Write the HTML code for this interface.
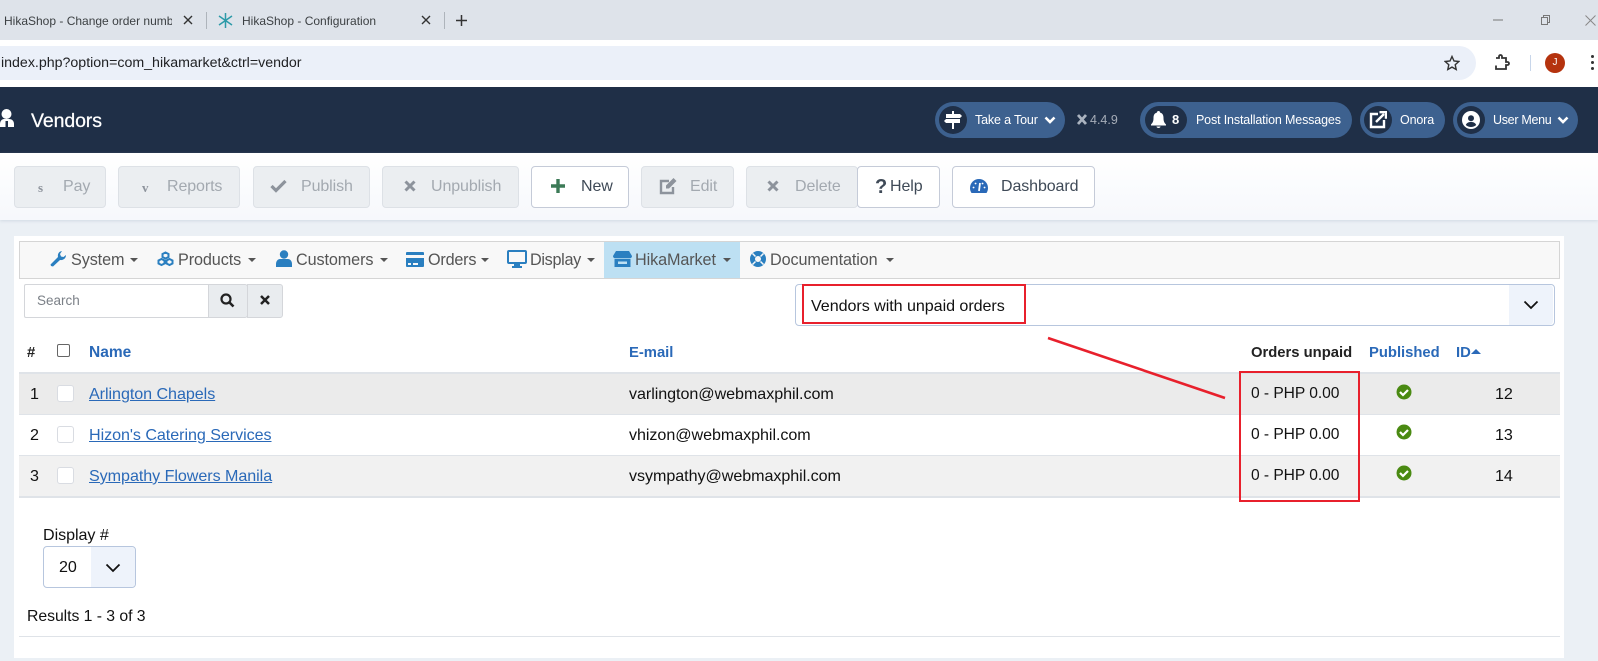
<!DOCTYPE html>
<html><head><meta charset="utf-8"><title>Vendors</title>
<style>
html,body{margin:0;padding:0}
body{width:1598px;height:661px;overflow:hidden;position:relative;background:#ebf0f5;font-family:"Liberation Sans",sans-serif;color:#111}
.a{position:absolute}
.t{position:absolute;white-space:nowrap;line-height:20px;height:20px}
.btn{position:absolute;top:166px;height:40px;border:1px solid #c5cbd8;border-radius:4px;background:#fff}
.dis{background:#ebeef1;border-color:#dde1e6}
.bt{font-size:16px;color:#3f4a57;letter-spacing:-.1px;top:177px}
.dt{color:#a3a9b0}
.pill{position:absolute;top:102px;height:36px;border-radius:18px;background:#3d618f}
.pc{position:absolute;top:106px;height:28px;border-radius:14px;background:#1f2f47}
.pt{color:#fff;font-size:12.5px;top:110px;letter-spacing:-.15px}
.nv{font-size:16.2px;color:#555;top:250px;letter-spacing:-.1px}
.car{position:absolute;top:258px;width:0;height:0;border:4px solid transparent;border-top-color:#555;border-bottom:0}
.row{position:absolute;left:19px;width:1541px}
.c{font-size:16.1px;color:#111;letter-spacing:-.05px}
.o{font-size:15.6px}
.lnk{font-size:16.1px;color:#2a69b8;text-decoration:underline;letter-spacing:-.05px}
.h{font-size:14.8px;font-weight:bold;color:#2a69b8;top:343px}
.cb{position:absolute;left:57px;width:15px;height:15px;background:#fff;border:1px solid #d9dce2;border-radius:3px}
svg{position:absolute;display:block}
</style></head>
<body>
<!-- browser chrome -->
<div class="a" style="left:0;top:0;width:1598px;height:40px;background:#dee3ea"></div>
<div class="a" style="left:0;top:40px;width:1598px;height:47px;background:#fff"></div>
<div class="a" style="left:0;top:46px;width:1476px;height:34px;background:#ebf0f9;border-radius:0 17px 17px 0"></div>
<div class="t" style="left:4px;top:11px;width:168px;overflow:hidden;font-size:12px;color:#3c4043">HikaShop - Change order numb</div>
<svg style="left:183px;top:15px" width="10" height="10" viewBox="0 0 10 10"><path d="M1 1l8 8M9 1l-8 8" stroke="#333" stroke-width="1.4"/></svg>
<div class="a" style="left:206px;top:12px;width:1px;height:17px;background:#aeb4bb"></div>
<svg style="left:218px;top:13px" width="15" height="15" viewBox="0 0 15 15"><path d="M7.500 0v15M1 3l13 9M14 3L1 12" stroke="#2c9aa8" stroke-width="1.5"/></svg>
<div class="t" style="left:242px;top:11px;font-size:12px;color:#3c4043">HikaShop - Configuration</div>
<svg style="left:421px;top:15px" width="10" height="10" viewBox="0 0 10 10"><path d="M1 1l8 8M9 1l-8 8" stroke="#333" stroke-width="1.4"/></svg>
<div class="a" style="left:444px;top:12px;width:1px;height:17px;background:#aeb4bb"></div>
<svg style="left:456px;top:15px" width="11" height="11" viewBox="0 0 11 11"><path d="M5.500 0v11M0 5.500h11" stroke="#333" stroke-width="1.500"/></svg>
<svg style="left:1492px;top:15px" width="12" height="10" viewBox="0 0 12 10"><path d="M1 5h10" stroke="#777"/></svg>
<svg style="left:1539px;top:14px" width="12" height="12" viewBox="0 0 12 12"><path d="M2.500 3.500h6v7h-6zM4.500 3.500V1.500h6v7H8.500" fill="none" stroke="#777"/></svg>
<svg style="left:1585px;top:15px" width="11" height="11" viewBox="0 0 11 11"><path d="M.5.500l10 10M10.500.500l-10 10" stroke="#888"/></svg>
<div class="t" style="left:1px;top:53px;font-size:14.2px;color:#202124">index.php?option=com_hikamarket&amp;ctrl=vendor</div>
<svg style="left:1444px;top:55px" width="16" height="16" viewBox="0 0 16 16"><path d="M8 1.500l2 4.500 4.800.5-3.600 3.200 1 4.800L8 12.100l-4.200 2.400 1-4.800L1.200 6.500 6 6z" fill="none" stroke="#333" stroke-width="1.400"/></svg>
<svg style="left:1494px;top:54px" width="16" height="17" viewBox="0 0 16 17"><path d="M2 4h3V2.500a1.500 1.500 0 013 0V4h4v4h1.500a1.500 1.500 0 010 3H12v4H2v-3.500" fill="none" stroke="#333" stroke-width="1.800"/></svg>
<div class="a" style="left:1530px;top:55px;width:1px;height:16px;background:#c8d6ea"></div>
<div class="a" style="left:1545px;top:53px;width:20px;height:20px;border-radius:50%;background:#b5330e;color:#fff;font-size:10px;line-height:20px;text-align:center">J</div>
<div class="a" style="left:1591px;top:55px;width:3px;height:3px;border-radius:50%;background:#333;box-shadow:0 6px 0 #333,0 12px 0 #333"></div>

<!-- header -->
<div class="a" style="left:0;top:87px;width:1598px;height:66px;background:#1f2f47"></div>
<svg style="left:0;top:108px" width="15" height="21" viewBox="0 0 15 21"><circle cx="6.500" cy="6" r="5" fill="#fff"/><path d="M0 19v-3c0-3 2-5 4-5h5c3 0 5 2 5 5v3z" fill="#fff"/><path d="M5.500 13h2.500v6H5.500z" fill="#1f2f47"/></svg>
<div class="t" style="left:31px;top:109px;font-size:19.500px;color:#fff;-webkit-text-stroke:.25px #fff;letter-spacing:-.1px;margin-top:2px">Vendors</div>

<div class="pill" style="left:935px;width:130px"></div><div class="pc" style="left:939px;width:28px"></div>
<svg style="left:944px;top:111px" width="18" height="18" viewBox="0 0 18 18"><path d="M8 0h2v3h6l2 2-2 2H2V3h6zM0 10l2-2h14v4h-6v6H8v-6H2z" fill="#fff"/></svg>
<div class="t pt" style="left:975px">Take a Tour</div>
<svg style="left:1044px;top:115px" width="12" height="10" viewBox="0 0 12 10"><path d="M1.500 2.500L6 7l4.500-4.500" fill="none" stroke="#fff" stroke-width="2.600"/></svg>
<svg style="left:1076px;top:113px" width="12" height="13" viewBox="0 0 12 13"><path d="M2 2l8 9M10 2l-8 9" stroke="#aab3bf" stroke-width="2.800"/></svg>
<div class="t" style="left:1090px;top:110px;font-size:12.500px;color:#a6adb8">4.4.9</div>

<div class="pill" style="left:1140px;width:212px"></div><div class="pc" style="left:1145px;width:42px"></div>
<svg style="left:1151px;top:111px" width="15" height="18" viewBox="0 0 15 18"><path d="M7.500 0c1 0 1.500.6 1.500 1.500C11.500 2.200 12.500 4 12.500 7c0 3 .6 4.500 2.500 6.500v1H0v-1C1.900 11.500 2.500 10 2.500 7c0-3 1-4.800 3.500-5.500C6 .6 6.500 0 7.500 0zM5.500 15.500h4c0 2-4 2-4 0z" fill="#fff"/></svg>
<div class="t" style="left:1172px;top:110px;font-size:13px;font-weight:bold;color:#fff">8</div>
<div class="t pt" style="left:1196px">Post Installation Messages</div>

<div class="pill" style="left:1360px;width:85px"></div><div class="pc" style="left:1364px;width:28px"></div>
<svg style="left:1369px;top:111px" width="18" height="18" viewBox="0 0 18 18"><path d="M9 3H2v13h13V9" fill="none" stroke="#fff" stroke-width="2.400"/><path d="M7 11L15 3M10.500 1.200H17v6.500" fill="none" stroke="#fff" stroke-width="2.400"/></svg>
<div class="t pt" style="left:1400px">Onora</div>

<div class="pill" style="left:1453px;width:125px"></div><div class="pc" style="left:1457px;width:28px"></div>
<svg style="left:1462px;top:111px" width="18" height="18" viewBox="0 0 18 18"><circle cx="9" cy="9" r="9" fill="#fff"/><circle cx="9" cy="7.200" r="3" fill="#1f2f47"/><path d="M3.800 14c1-2.500 3-3 5.200-3s4.200.5 5.200 3c-2.800 2.600-7.600 2.600-10.400 0z" fill="#1f2f47"/></svg>
<div class="t pt" style="left:1493px;letter-spacing:-.3px">User Menu</div>
<svg style="left:1557px;top:115px" width="12" height="10" viewBox="0 0 12 10"><path d="M1.500 2.500L6 7l4.500-4.500" fill="none" stroke="#fff" stroke-width="2.600"/></svg>

<!-- toolbar -->
<div class="a" style="left:0;top:153px;width:1598px;height:67px;background:linear-gradient(#fff,#f6f8fc);box-shadow:0 1px 3px rgba(160,175,195,.35)"></div>
<div class="btn dis" style="left:14px;width:90px"></div>
<div class="t" style="left:38px;top:178px;font-family:'Liberation Serif',serif;font-size:13px;font-weight:bold;color:#8d939c">s</div>
<div class="t bt dt" style="left:63px">Pay</div>
<div class="btn dis" style="left:118px;width:120px"></div>
<div class="t" style="left:142px;top:178px;font-family:'Liberation Serif',serif;font-size:13px;font-weight:bold;color:#8d939c">v</div>
<div class="t bt dt" style="left:167px">Reports</div>
<div class="btn dis" style="left:253px;width:115px"></div>
<svg style="left:270px;top:178px" width="17" height="15" viewBox="0 0 17 15"><path d="M1.500 8L6 12.500 15.500 3" fill="none" stroke="#8d939c" stroke-width="3.200"/></svg>
<div class="t bt dt" style="left:301px">Publish</div>
<div class="btn dis" style="left:382px;width:135px"></div>
<svg style="left:404px;top:180px" width="12" height="12" viewBox="0 0 12 12"><path d="M1.500 1.500l9 9M10.500 1.500l-9 9" stroke="#8d939c" stroke-width="3"/></svg>
<div class="t bt dt" style="left:431px">Unpublish</div>
<div class="btn" style="left:531px;width:96px"></div>
<svg style="left:551px;top:179px" width="14" height="14" viewBox="0 0 14 14"><path d="M7 0v14M0 7h14" stroke="#3c7a57" stroke-width="3.400"/></svg>
<div class="t bt" style="left:581px">New</div>
<div class="btn dis" style="left:641px;width:91px"></div>
<svg style="left:659px;top:177px" width="19" height="18" viewBox="0 0 19 18"><path d="M14 10v6H2V4h8" fill="none" stroke="#8d939c" stroke-width="2.400"/><path d="M7 8.500L14.500 1l3 3L10 11.500H7z" fill="#8d939c"/></svg>
<div class="t bt dt" style="left:690px">Edit</div>
<div class="btn dis" style="left:746px;width:110px"></div>
<svg style="left:767px;top:180px" width="12" height="12" viewBox="0 0 12 12"><path d="M1.500 1.500l9 9M10.500 1.500l-9 9" stroke="#8d939c" stroke-width="3"/></svg>
<div class="t bt dt" style="left:795px">Delete</div>
<div class="btn" style="left:857px;width:81px"></div>
<div class="t" style="left:875px;top:177px;font-size:20px;font-weight:bold;color:#3f4a57">?</div>
<div class="t bt" style="left:890px">Help</div>
<div class="btn" style="left:952px;width:141px"></div>
<svg style="left:970px;top:178px" width="18" height="15" viewBox="0 0 18 15"><path d="M0 10a9 9 0 0118 0c0 2-.6 3.500-1.500 5H1.500C.6 13.500 0 12 0 10z" fill="#2a69b8"/><path d="M9 13l1-8" stroke="#fff" stroke-width="1.800" fill="none"/><path d="M3.500 9.500h.1M14.500 9.500h.1M5.500 5.500h.1M12.500 5.500h.1" stroke="#fff" stroke-width="1.800" stroke-linecap="round" fill="none"/></svg>
<div class="t bt" style="left:1001px">Dashboard</div>

<!-- main panel -->
<div class="a" style="left:14px;top:236px;width:1550px;height:422px;background:#fff"></div>
<div class="a" style="left:19px;top:241px;width:1539px;height:36px;background:#f8f8f8;border:1px solid #d5d5d5"></div>
<div class="a" style="left:604px;top:242px;width:136px;height:36px;background:#bde0f3"></div>
<svg style="left:50px;top:251px" width="16" height="16" viewBox="0 0 16 16"><path d="M1 15l-.5-1.500L8 6c-.6-2.500.6-5.500 4-6l-2 3 1 2.500L13.500 6 16 4c0 3.500-3 5.500-6 5L3 15.500z" fill="#2a7fc0"/></svg>
<div class="t nv" style="left:71px">System</div><div class="car" style="left:130px"></div>
<svg style="left:157px;top:251px" width="17" height="16" viewBox="0 0 17 16"><g fill="none" stroke="#2a7fc0" stroke-width="2"><path d="M8.500 1.500l3 1.500v3l-3 1.500-3-1.500V3z"/><path d="M4.500 8l3 1.500v3L4.500 14l-3-1.500v-3z"/><path d="M12.500 8l3 1.500v3l-3 1.500-3-1.500v-3z"/></g></svg>
<div class="t nv" style="left:178px">Products</div><div class="car" style="left:248px"></div>
<svg style="left:276px;top:250px" width="16" height="17" viewBox="0 0 16 17"><circle cx="8" cy="4.500" r="4.200" fill="#2a7fc0"/><path d="M0 17v-3c0-3 2-5 4-5h8c2 0 4 2 4 5v3z" fill="#2a7fc0"/></svg>
<div class="t nv" style="left:296px">Customers</div><div class="car" style="left:380px"></div>
<svg style="left:406px;top:252px" width="18" height="15" viewBox="0 0 18 15"><path d="M1 0h16a1 1 0 011 1v2H0V1a1 1 0 011-1zM0 6h18v8a1 1 0 01-1 1H1a1 1 0 01-1-1zm2 5v2h3v-2zm5 0v2h5v-2z" fill="#2a7fc0" fill-rule="evenodd"/></svg>
<div class="t nv" style="left:428px;letter-spacing:-.2px">Orders</div><div class="car" style="left:481px"></div>
<svg style="left:507px;top:250px" width="20" height="18" viewBox="0 0 20 18"><rect x="1" y="1" width="18" height="12" rx="1" fill="none" stroke="#2a7fc0" stroke-width="2"/><path d="M7 14h6v2h2v2H5v-2h2z" fill="#2a7fc0"/></svg>
<div class="t nv" style="left:530px;letter-spacing:-.3px">Display</div><div class="car" style="left:587px"></div>
<svg style="left:613px;top:251px" width="19" height="16" viewBox="0 0 19 16"><path d="M3 0h13l3 5c0 1.500-1 2.200-2 2.200H2C1 7.200 0 6.500 0 5zM1.500 8h16v8h-16zM5 10.500v2.500h9v-2.500z" fill="#2a7fc0" fill-rule="evenodd"/></svg>
<div class="t nv" style="left:635px">HikaMarket</div><div class="car" style="left:723px"></div>
<svg style="left:750px;top:251px" width="16" height="16" viewBox="0 0 16 16"><circle cx="8" cy="8" r="5.500" fill="none" stroke="#2a7fc0" stroke-width="5"/><path d="M2.500 2.500l3 3M13.500 2.500l-3 3M2.500 13.500l3-3M13.500 13.500l-3-3" stroke="#f8f8f8" stroke-width="1.500"/></svg>
<div class="t nv" style="left:770px">Documentation</div><div class="car" style="left:886px"></div>

<!-- search -->
<div class="a" style="left:24px;top:284px;width:184px;height:32px;border:1px solid #d4d6da;border-right:0;background:#fff;border-radius:2px 0 0 2px"></div>
<div class="t" style="left:37px;top:291px;font-size:13.500px;color:#7b8087">Search</div>
<div class="a" style="left:208px;top:284px;width:38px;height:32px;background:#e9ecef;border:1px solid #d4d6da;border-radius:0 3px 3px 0"></div>
<svg style="left:220px;top:293px" width="15" height="15" viewBox="0 0 15 15"><circle cx="6" cy="6" r="4.500" fill="none" stroke="#222" stroke-width="2.200"/><path d="M9.500 9.500l4 4" stroke="#222" stroke-width="2.600"/></svg>
<div class="a" style="left:247px;top:284px;width:34px;height:32px;background:#e9ecef;border:1px solid #d4d6da;border-radius:0 3px 3px 0"></div>
<svg style="left:260px;top:295px" width="10" height="10" viewBox="0 0 10 10"><path d="M1 1l8 8M9 1l-8 8" stroke="#222" stroke-width="2.500"/></svg>

<!-- filter select -->
<div class="a" style="left:795px;top:284px;width:758px;height:40px;border:1px solid #b7c6de;border-radius:4px;background:#fff"></div>
<div class="a" style="left:1509px;top:285px;width:44px;height:40px;background:#eef3fb;border-radius:0 4px 4px 0"></div>
<svg style="left:1523px;top:300px" width="16" height="10" viewBox="0 0 16 10"><path d="M1.500 1.500L8 8l6.500-6.500" fill="none" stroke="#111" stroke-width="1.800"/></svg>
<div class="t c" style="left:811px;top:296px">Vendors with unpaid orders</div>

<!-- table header -->
<div class="t h" style="left:27px;color:#222">#</div>
<div class="a" style="left:57px;top:344px;width:11px;height:11px;border:1px solid #666;border-radius:2px;background:#fff"></div>
<div class="t h" style="left:89px;font-size:15.500px">Name</div>
<div class="t h" style="left:629px">E-mail</div>
<div class="t h" style="left:1251px;color:#222">Orders unpaid</div>
<div class="t h" style="left:1369px">Published</div>
<div class="t h" style="left:1456px">ID</div>
<div class="a" style="left:1471px;top:349px;width:0;height:0;border:5px solid transparent;border-bottom-color:#2a69b8;border-top:0"></div>

<!-- rows -->
<div class="row" style="top:372px;height:42px;background:#ebebeb;border-top:2px solid #dfe3e8;box-sizing:border-box"></div>
<div class="row" style="top:414px;height:41px;background:#fff;border-top:1px solid #dfe3e8;box-sizing:border-box"></div>
<div class="row" style="top:455px;height:43px;background:#f1f1f1;border-top:1px solid #dfe3e8;border-bottom:2px solid #dfe3e8;box-sizing:border-box"></div>

<div class="t c" style="left:30px;top:384px">1</div><div class="cb" style="top:385px"></div>
<div class="t lnk" style="left:89px;top:384px">Arlington Chapels</div>
<div class="t c" style="left:629px;top:384px">varlington@webmaxphil.com</div>
<div class="t c o" style="left:1251px;top:384px">0 - PHP 0.00</div>
<div class="t c" style="left:1495px;top:384px">12</div>

<div class="t c" style="left:30px;top:425px">2</div><div class="cb" style="top:426px"></div>
<div class="t lnk" style="left:89px;top:425px">Hizon's Catering Services</div>
<div class="t c" style="left:629px;top:425px">vhizon@webmaxphil.com</div>
<div class="t c o" style="left:1251px;top:425px">0 - PHP 0.00</div>
<div class="t c" style="left:1495px;top:425px">13</div>

<div class="t c" style="left:30px;top:466px">3</div><div class="cb" style="top:467px"></div>
<div class="t lnk" style="left:89px;top:466px">Sympathy Flowers Manila</div>
<div class="t c" style="left:629px;top:466px">vsympathy@webmaxphil.com</div>
<div class="t c o" style="left:1251px;top:466px">0 - PHP 0.00</div>
<div class="t c" style="left:1495px;top:466px">14</div>

<svg style="left:1396px;top:384px" width="16" height="16" viewBox="0 0 16 16"><circle cx="8" cy="8" r="7.500" fill="#4a8a12"/><path d="M4 8l3 3 5-5" fill="none" stroke="#fff" stroke-width="2.200"/></svg>
<svg style="left:1396px;top:424px" width="16" height="16" viewBox="0 0 16 16"><circle cx="8" cy="8" r="7.500" fill="#4a8a12"/><path d="M4 8l3 3 5-5" fill="none" stroke="#fff" stroke-width="2.200"/></svg>
<svg style="left:1396px;top:465px" width="16" height="16" viewBox="0 0 16 16"><circle cx="8" cy="8" r="7.500" fill="#4a8a12"/><path d="M4 8l3 3 5-5" fill="none" stroke="#fff" stroke-width="2.200"/></svg>

<!-- footer -->
<div class="t c" style="left:43px;top:525px">Display #</div>
<div class="a" style="left:43px;top:546px;width:91px;height:40px;border:1px solid #b7c6de;border-radius:4px;background:#fff"></div>
<div class="a" style="left:91px;top:547px;width:44px;height:40px;background:#eef3fb;border-radius:0 4px 4px 0"></div>
<div class="t c" style="left:59px;top:557px">20</div>
<svg style="left:105px;top:563px" width="16" height="10" viewBox="0 0 16 10"><path d="M1.500 1.500L8 8l6.500-6.500" fill="none" stroke="#111" stroke-width="1.800"/></svg>
<div class="t c" style="left:27px;top:607px;font-size:15.800px">Results 1 - 3 of 3</div>
<div class="a" style="left:19px;top:636px;width:1541px;height:1px;background:#dfe3e8"></div>

<!-- annotations -->
<div class="a" style="left:802px;top:284px;width:220px;height:36px;border:2px solid #e8202c"></div>
<div class="a" style="left:1239px;top:371px;width:117px;height:127px;border:2px solid #e8202c"></div>
<svg style="left:1040px;top:330px" width="195" height="75" viewBox="0 0 195 75"><path d="M8 8L185 68" stroke="#e8202c" stroke-width="2.600"/></svg>
</body></html>
